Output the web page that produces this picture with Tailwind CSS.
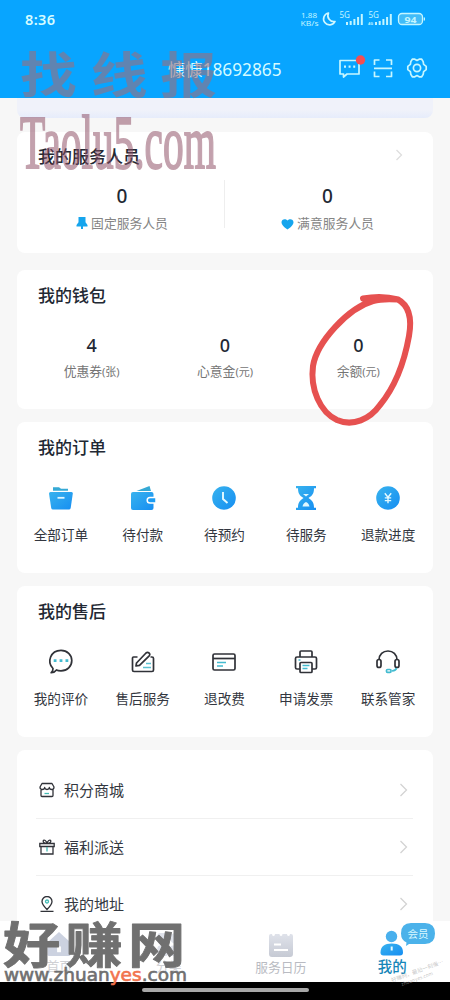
<!DOCTYPE html>
<html lang="zh-CN">
<head>
<meta charset="utf-8">
<meta name="viewport" content="width=device-width, initial-scale=1">
<title>我的</title>
<script src="https://cdn.jsdelivr.net/npm/@tailwindcss/browser@4"></script>
</head>
<body class="bg-[#f7f7f7]">
<div class="relative flex h-[1000px] w-[450px] flex-col overflow-hidden bg-[#f7f7f7] font-['Noto_Sans','Noto_Sans_CJK_SC',sans-serif] text-[#222833]">
  <header class="flex h-[98px] shrink-0 flex-col bg-[#08a5ff] text-[#d5fbff]">
    <div class="flex h-[38px] items-center justify-between pt-[2px] pr-[24px] pl-[25px]">
      <span class="text-[14.5px] leading-none font-semibold tracking-[0.4px]">8:36</span>
      <svg class="mb-[2px] h-[20px] w-[126px]" viewBox="300 9 126 20" fill="#c4f5ff" font-family="Noto Sans, sans-serif">
        <text x="301" y="17.5" font-size="7.5" textLength="16" lengthAdjust="spacingAndGlyphs">1.88</text>
        <text x="300.5" y="25.5" font-size="7.5" textLength="18" lengthAdjust="spacingAndGlyphs">KB/s</text>
        <path d="M328.500 13 A6 6 0 1 0 335 21.500 A6 6 0 0 1 328.500 13Z" fill="none" stroke="#d0f7ff" stroke-width="1.700" stroke-linejoin="round"/>
        <text x="339.500" y="17.800" font-size="8">5G</text>
        <path d="M346 22h2v3h-2zM349.700 21h2v4h-2zM353.400 19h2v6h-2zM357.100 17h2v8h-2zM360.800 14h2v11h-2z"/>
        <text x="368.500" y="17.800" font-size="8">5G</text>
        <text x="368" y="25" font-size="4" font-weight="bold">4G</text>
        <path d="M375 22h2v3h-2zM378.700 21h2v4h-2zM382.400 19h2v6h-2zM386.100 17h2v8h-2zM389.800 14h2v11h-2z"/>
        <rect x="398.500" y="13.500" width="24" height="11" rx="3.500" fill="#42bcf8" stroke="#c4f5ff" stroke-width="1.300"/>
        <path d="M423.700 17.500h1.300v3h-1.300z"/>
        <text x="404.500" y="22.500" font-size="9" font-weight="bold" textLength="12" lengthAdjust="spacingAndGlyphs">94</text>
      </svg>
    </div>
    <div class="flex h-[62px] items-center justify-end pr-[22px]">
      <h1 class="mt-[4px] mr-[56px] w-[114px] text-[17.300px] leading-none whitespace-nowrap">慷慷18692865</h1>
      <svg class="h-[26px] w-[90px]" viewBox="338 55 90 26" fill="none" stroke="#c7f6ff" stroke-width="1.700" stroke-linejoin="round">
        <path d="M340 60.500h19v13.500h-12l-3.500 3v-3h-3.500z"/>
        <path d="M344 66.700h2M348.600 66.700h2M353.200 66.700h2" stroke-width="2.200"/>
        <circle cx="360.500" cy="60" r="4.700" fill="#f34e53" stroke="none"/>
        <path d="M374.500 65v-5h5M386 60h5.500v5M391.500 71.500v5h-5.500M379.500 76.500h-5v-5M374 68.300h18"/>
        <path d="M412.300 59.200 L414.800 59.200 L417 60.500 L419.200 59.200 L421.700 59.200 L423.200 61.600 L423.600 64.400 L426.200 66.400 V69.600 L423.600 71.600 L423.200 74.400 L421.700 76.800 H419.200 L417 75.500 L414.800 76.800 H412.300 L410.800 74.400 L410.400 71.600 L407.800 69.600 V66.400 L410.400 64.400 L410.800 61.600Z"/>
        <circle cx="417" cy="68" r="3.600"/>
      </svg>
    </div>
  </header>

  <main class="flex min-h-0 flex-1 flex-col overflow-hidden px-[17px]">
    <div class="h-[20px] shrink-0 rounded-b-lg bg-linear-to-b from-[#f0f2fa] from-60% to-[#e6ecfb]"></div>

    <section class="mt-[14px] h-[121px] shrink-0 rounded-lg bg-white">
      <div class="flex h-[48px] items-center justify-between pr-[30px] pl-[21px]">
        <h2 class="text-[17px] leading-none font-medium">我的服务人员</h2>
        <svg class="mb-[2px] h-[12px] w-[8px]" viewBox="0 0 8 12" fill="none" stroke="#dedede" stroke-width="1.300"><path d="M1.500 1l5 5-5 5"/></svg>
      </div>
      <div class="flex h-[48px] text-center">
        <div class="flex w-[208px] flex-col items-center border-r border-[#eeeeee] pl-[3px]">
          <b class="mt-[6px] text-[19px] leading-[20px] font-medium">0</b>
          <div class="mt-[10px] flex items-center gap-[3px] text-[12.800px] leading-[14px] text-[#858585]">
            <svg class="h-[12px] w-[12px]" viewBox="0 0 12 12" fill="#16a5ed"><path d="M2.500 0h7v5.300l2 2.700v1.500H7V12H5V9.500H.5V8l2-2.700z"/></svg>
            <span class="whitespace-nowrap">固定服务人员</span>
          </div>
        </div>
        <div class="flex flex-1 flex-col items-center pr-[3px]">
          <b class="mt-[6px] text-[19px] leading-[20px] font-medium">0</b>
          <div class="mt-[10px] flex items-center gap-[3px] text-[12.800px] leading-[14px] text-[#858585]">
            <svg class="mt-[2px] h-[12px] w-[13px]" viewBox="0 0 13 12" fill="#16a5ed"><path d="M6.500 11.500C3.800 9.600.5 7 .5 4.200.5 1 4.500.2 6.500 2.500c2-2.300 6-1.500 6 1.700 0 2.800-3.300 5.400-6 7.300z"/></svg>
            <span class="whitespace-nowrap">满意服务人员</span>
          </div>
        </div>
      </div>
    </section>

    <section class="mt-[17px] h-[139px] shrink-0 rounded-lg bg-white">
      <h2 class="flex h-[51px] items-center pb-[1px] pl-[21px] text-[17px] leading-none font-medium">我的钱包</h2>
      <div class="grid grid-cols-3 px-[8px] text-center text-[12.800px] text-[#747474]">
        <div><b class="mt-[14px] block text-[18px] leading-[20px] font-medium text-[#222833]">4</b><p class="mt-[8px] leading-[16px]">优惠券<span class="text-[11px]">(张)</span></p></div>
        <div><b class="mt-[14px] block text-[18px] leading-[20px] font-medium text-[#222833]">0</b><p class="mt-[8px] leading-[16px]">心意金<span class="text-[11px]">(元)</span></p></div>
        <div><b class="mt-[14px] block text-[18px] leading-[20px] font-medium text-[#222833]">0</b><p class="mt-[8px] leading-[16px]">余额<span class="text-[11px]">(元)</span></p></div>
      </div>
    </section>

    <section class="mt-[13px] h-[151px] shrink-0 rounded-lg bg-white">
      <h2 class="flex h-[51px] items-center pb-[1px] pl-[21px] text-[17px] leading-none font-medium">我的订单</h2>
      <div class="grid grid-cols-5 pr-[4px] pl-[3px] text-center text-[13.600px] leading-[18px] text-[#333740]">
        <div class="flex flex-col items-center gap-[14px] pt-[11px]">
          <svg class="h-[28px] w-[28px]" viewBox="0 0 28 28"><path d="M6 6.800V3.300h6l2 1.500h7v2z" fill="#35a9d5"/><path d="M2 9.500q0-1.500 1.500-1.500h21q1.500 0 1.300 1.500L23.700 24q-.3 1.600-1.800 1.600H6q-1.500 0-1.800-1.600z" fill="url(#g)"/><path d="M10.500 13.800h7" stroke="#dff7ff" stroke-width="1.800"/></svg><span>全部订单</span></div>
        <div class="flex flex-col items-center gap-[14px] pt-[11px]">
          <svg class="h-[28px] w-[28px]" viewBox="0 0 28 28"><path d="M7.500 7 20.500 2l1.500 5z" fill="#35a9d5"/><rect x="2" y="8" width="22.500" height="18" rx="2" fill="url(#g)"/><path d="M27 13.500h-6a2.700 2.700 0 0 0 0 5.600h6z" fill="#1c9cf2" stroke="#fff" stroke-width="1.500"/></svg><span>待付款</span></div>
        <div class="flex flex-col items-center gap-[14px] pt-[11px]">
          <svg class="h-[28px] w-[28px]" viewBox="0 0 28 28"><circle cx="14" cy="14" r="11.800" fill="url(#g)"/><path d="M13 8v7l4.500 4" fill="none" stroke="#e4faff" stroke-width="1.900"/></svg><span>待预约</span></div>
        <div class="flex flex-col items-center gap-[14px] pt-[11px]">
          <svg class="h-[28px] w-[28px]" viewBox="0 0 28 28"><path d="M4 2h20v2.200h-2c0 5-1.500 7.300-5.500 9.800 4 2.500 5.500 5 5.500 9.800h2V26H4v-2.200h2c0-4.800 1.500-7.300 5.500-9.800C7.500 11.500 6 9.200 6 4.200H4z" fill="url(#g)"/><path d="M11 10h6L14 12.500zM10.500 22.500c.5-2.500 1.500-3.500 3.500-4.500 2 1 3 2 3.500 4.500z" fill="#dff7ff"/></svg><span>待服务</span></div>
        <div class="flex flex-col items-center gap-[14px] pt-[11px]">
          <svg class="h-[28px] w-[28px]" viewBox="0 0 28 28"><circle cx="14" cy="14" r="11.800" fill="url(#g)"/><path d="M10.800 9.300 14 13.300l3.200-4M14 13.300v6M10.800 13.900h6.400M10.800 16.600h6.400" fill="none" stroke="#e4faff" stroke-width="1.400"/></svg><span>退款进度</span></div>
      </div>
    </section>

    <section class="mt-[13px] h-[151px] shrink-0 rounded-lg bg-white">
      <h2 class="flex h-[51px] items-center pb-[1px] pl-[21px] text-[17px] leading-none font-medium">我的售后</h2>
      <div class="grid grid-cols-5 pr-[4px] pl-[3px] text-center text-[13.600px] leading-[18px] text-[#333740]">
        <div class="flex flex-col items-center gap-[14px] pt-[11px]">
          <svg class="h-[28px] w-[28px]" viewBox="0 0 28 28" fill="none" stroke="#303238" stroke-width="1.700"><path d="M6 20.500C-.5 14 3.500 2.300 14 2.300c6.200 0 10.800 4.500 10.800 10.200S20.200 22.800 14 22.800c-1.700 0-3 0-4.500-.8-1.200 1.600-3.200 2.700-5.300 2.700 1.300-1.200 1.900-2.500 1.800-4.200z" stroke-linejoin="round"/><path d="M6.700 12.700h2.800M12.600 12.700h2.800M18.500 12.700h2.800" stroke="#43bbd0" stroke-width="2.800"/></svg><span>我的评价</span></div>
        <div class="flex flex-col items-center gap-[14px] pt-[11px]">
          <svg class="h-[28px] w-[28px]" viewBox="0 0 28 28" fill="none" stroke="#303238" stroke-width="1.700"><path d="M8.500 9H4.500q-1 0-1 1V22q0 1.500 1.500 1.500h18q1.500 0 1.500-1.500V10.500Q24.500 9 23 9h-1.500"/><path d="m7.500 15 9.500-10q1.500-1.200 3 0t.2 2.800l-9.700 9.500-3.500.7z" stroke-linejoin="round"/><path d="M17 15.500h5M14 19.500h8" stroke="#5bc1d2"/></svg><span>售后服务</span></div>
        <div class="flex flex-col items-center gap-[14px] pt-[11px]">
          <svg class="h-[28px] w-[28px]" viewBox="0 0 28 28" fill="none" stroke="#303238" stroke-width="1.700"><rect x="3" y="6" width="22" height="16" rx="1.500"/><path d="M3 10.500h22"/><path d="M7 14.500h9M7 18h6" stroke="#43bbd0"/></svg><span>退改费</span></div>
        <div class="flex flex-col items-center gap-[14px] pt-[11px]">
          <svg class="h-[28px] w-[28px]" viewBox="0 0 28 28" fill="none" stroke="#303238" stroke-width="1.700"><path d="M8 9V4q0-1 1-1h10q1 0 1 1v5M8 21H5q-1.500 0-1.500-1.500v-9Q3.500 9 5 9h18q1.500 0 1.500 1.500v9Q24.500 21 23 21h-3"/><rect x="8" y="14.500" width="12" height="10" rx="1"/><path d="M10.500 17.500h7M10.500 20.500h5M6.500 12h2" stroke="#43bbd0"/></svg><span>申请发票</span></div>
        <div class="flex flex-col items-center gap-[14px] pt-[11px]">
          <svg class="h-[28px] w-[28px]" viewBox="0 0 28 28" fill="none" stroke="#303238" stroke-width="1.700"><path d="M5 12C5 6.500 9 3 14 3s9 3.500 9 9"/><rect x="3" y="11.500" width="4" height="8" rx="2"/><rect x="21" y="11.500" width="4" height="8" rx="2"/><path d="M22.500 20q-.5 2.500-4.500 3" stroke="#43bbd0"/><rect x="12.500" y="21.500" width="4.500" height="2.800" rx="1" stroke="#43bbd0"/></svg><span>联系管家</span></div>
      </div>
    </section>

    <section class="mt-[13px] h-[185px] shrink-0 rounded-t-lg bg-white pt-[11px] pr-[20px] pl-[19px] text-[15px] leading-none text-[#333740]">
      <div class="flex h-[58px] items-center border-b border-[#f0f0f0] pl-[3px]">
        <svg class="mr-[9px] h-[16px] w-[16px]" viewBox="0 0 16 16" fill="none" stroke="#303238" stroke-width="1.300"><path d="M2 7v6.500q0 1 1 1h10q1 0 1-1V7M3 1.500h10L15 5q0 2.500-2.200 2.500Q10.500 7.500 10.300 5.500 10 7.500 8 7.500T5.700 5.500Q5.500 7.500 3.200 7.500 1 7.500 1 5z" stroke-linejoin="round"/><path d="M5.500 11.500h4.500" stroke="#43bbb5"/></svg>
        <span class="mt-[2px] flex-1">积分商城</span>
        <svg class="mr-[5px] h-[14px] w-[9px]" viewBox="0 0 9 14" fill="none" stroke="#d3d3d3" stroke-width="1.300"><path d="M1.500 1l6 6-6 6"/></svg>
      </div>
      <div class="flex h-[57px] items-center border-b border-[#f0f0f0] pl-[3px]">
        <svg class="mr-[9px] h-[16px] w-[16px]" viewBox="0 0 16 16" fill="none" stroke="#303238" stroke-width="1.300"><path d="M.8 4.500h14.400v3H.8zM2 7.500h12v7.500H2zM8 4.500C5 4 4 3 4.200 1.800 5 .3 7.500 1.500 8 4.500c.5-3 3-4.200 3.800-2.700C12 3 11 4 8 4.500z"/><path d="M8 8v4.500" stroke="#43bbb5"/></svg>
        <span class="mt-[1px] flex-1">福利派送</span>
        <svg class="mr-[5px] h-[14px] w-[9px]" viewBox="0 0 9 14" fill="none" stroke="#d3d3d3" stroke-width="1.300"><path d="M1.500 1l6 6-6 6"/></svg>
      </div>
      <div class="flex h-[57px] items-center pb-[2px] pl-[3px]">
        <svg class="mr-[9px] h-[16px] w-[16px]" viewBox="0 0 16 16" fill="none" stroke="#303238" stroke-width="1.300"><path d="M8 13.500C5 10.500 3 8.500 3 5.500a5 5 0 0 1 10 0c0 3-2 5-5 8zM1.500 15.300h13"/><circle cx="8" cy="5.500" r="1.500" stroke="#43bbb5"/></svg>
        <span class="mt-[2px] flex-1">我的地址</span>
        <svg class="mr-[5px] h-[14px] w-[9px]" viewBox="0 0 9 14" fill="none" stroke="#d3d3d3" stroke-width="1.300"><path d="M1.500 1l6 6-6 6"/></svg>
      </div>
    </section>
  </main>

  <nav class="grid h-[61px] shrink-0 grid-cols-4 bg-white text-center text-[12.800px] leading-[16px] text-[#b9bbc2]">
    <div class="flex flex-col items-center pt-[10px] pl-[6px]"><svg class="h-[27px] w-[28px]" viewBox="0 0 28 28"><path d="M14 1 26 12v12q0 2-2 2H4q-2 0-2-2V12z" fill="#ccd2e0"/><path d="M12 16h4v6h-4z" fill="#fff"/></svg><span class="text-[#cfd0d4]">首页</span></div>
    <div class="flex flex-col items-center pt-[10px]"><svg class="h-[27px] w-[28px]" viewBox="0 0 28 28" fill="#dfe2ea"><rect x="2" y="2" width="11" height="11" rx="3"/><rect x="15" y="2" width="11" height="11" rx="5.500"/><rect x="2" y="15" width="11" height="11" rx="3"/><rect x="15" y="15" width="11" height="11" rx="3"/></svg><span class="text-[#cfd0d4]">分类</span></div>
    <div class="flex flex-col items-center pt-[10px] pr-[1px]"><svg class="h-[28px] w-[28px]" viewBox="0 0 28 28"><path d="M2 5q0-2 2-2h1q0 2 1.500 2T8 3h4.500q0 2 1.500 2t1.500-2H20q0 2 1.500 2T23 3h1q2 0 2 2v18q0 3-3 3H5q-3 0-3-3z" fill="url(#s)"/><path d="M7 13.500h7M7 19h14" stroke="#fff" stroke-width="2.200"/></svg><span>服务日历</span></div>
    <div class="flex flex-col items-center pt-[8px] pr-[3px] text-[14.500px] font-medium text-[#1685b8]"><svg class="h-[28px] w-[28px]" viewBox="0 0 28 28"><circle cx="13.500" cy="7.500" r="5.700" fill="#49b0ed"/><path d="M2.500 23.500c0-6 4-9 11.300-9S25 17.500 25 23.500q0 3-3 3H5.500q-3 0-3-3z" fill="url(#g)"/><path d="M13.700 17.500v4" stroke="#e4faff" stroke-width="2"/></svg><span class="mt-[1px]">我的</span></div>
  </nav>
  <footer class="flex h-[18px] shrink-0 justify-center bg-black pt-[6px]"><div class="h-[4px] w-[167px] rounded-sm bg-[#a7a7a7]"></div></footer>

  <svg class="pointer-events-none absolute inset-0 h-[1000px] w-[450px]" viewBox="0 0 450 1000" aria-hidden="true">
    <defs>
      <linearGradient id="g" x1="0" y1="0" x2="1" y2="1"><stop stop-color="#38b3ee"/><stop offset="1" stop-color="#168ef2"/></linearGradient>
      <linearGradient id="s" x1="0" y1="0" x2="0" y2="1"><stop stop-color="#dfe2ea"/><stop offset="1" stop-color="#c6cad4"/></linearGradient>
    </defs>
    <text transform="translate(20 93) scale(1.160 1)" font-family="Noto Sans CJK SC, sans-serif" font-weight="bold" font-size="49" x="0 61 121" fill="#a06c78" fill-opacity=".58">找线报</text>
    <text transform="translate(20 167.500) scale(.547 1)" font-family="Liberation Serif, serif" font-size="77" fill="#8d4c63" stroke="#8d4c63" stroke-width="2" opacity=".52" textLength="358" lengthAdjust="spacingAndGlyphs">Taolu5.com</text>
    <path d="M363 298.500C377 296 389 297 398 299.500C410 306 412 319 409 336C404 364 394 388 380 405C370 419 353 427 337 420C320 412 310 389 313 366C317 342 348 308 373 301C382 298.500 391 299 398 299.500" fill="none" stroke="#e65150" stroke-width="6" stroke-linecap="round" stroke-linejoin="round"/>
    <path d="M411 923h14q10 0 10 10.500t-10 10.500h-16l-3 2 .5-3.500q-5.500-2.500-5.500-9 0-10.500 10-10.500z" fill="#4bb2ea"/>
    <text x="407.500" y="937.500" font-family="Noto Sans CJK SC, sans-serif" font-size="10.500" fill="#d9f8ff">会员</text>
    <g transform="rotate(-20 415 975)" font-family="Noto Sans CJK SC, sans-serif" fill="#aaa" fill-opacity=".65"><text x="391" y="974" font-size="5.500">好赚网，最后一刻慢…</text><text x="399" y="981" font-size="5">zhuanyes.com</text></g>
    <g fill="#707070">
      <text transform="translate(3 963) scale(1.180 1)" x="0 53 106" font-family="Noto Sans CJK SC, sans-serif" font-weight="bold" font-size="48.500" stroke="#707070" stroke-width=".8" stroke-linejoin="round">好赚网</text>
      <text x="4" y="981" font-family="DejaVu Sans, sans-serif" font-size="17" stroke="#707070" stroke-width=".6" textLength="183" lengthAdjust="spacingAndGlyphs">www.zhuan<tspan fill="#f2734e" stroke="#f2734e">yes</tspan>.com</text>
    </g>
  </svg>
</div>
</body>
</html>
